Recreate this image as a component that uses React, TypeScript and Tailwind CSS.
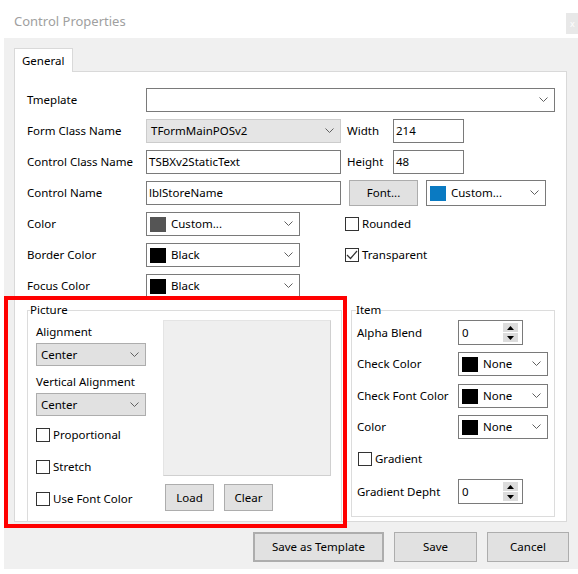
import type { ReactNode } from "react";

const Chevron = () => (
  <svg width="9" height="6" viewBox="0 0 9 6" className="shrink-0">
    <polyline points="0.5,0.5 4.5,4.5 8.5,0.5" fill="none" stroke="#606060" strokeWidth="1" />
  </svg>
);

const Combo = (props: {
  className?: string;
  swatch?: string;
  text?: string;
  variant?: "white" | "disabled" | "button";
}) => {
  const variant = props.variant ?? "white";
  const skin =
    variant === "white"
      ? "bg-white border-[#7a7a7a]"
      : variant === "disabled"
        ? "bg-[#e5e5e5] border-[#cccccc]"
        : "bg-[#e1e1e1] border-[#adadad]";
  return (
    <div className={`flex items-center border ${skin} pr-[6px] ${props.className ?? ""}`}>
      {props.swatch && (
        <span className="ml-[3px] h-[15px] w-[16px] shrink-0" style={{ background: props.swatch }} />
      )}
      <span className={`flex-1 truncate ${props.swatch ? "pl-[5px]" : "pl-[4px]"}`}>{props.text}</span>
      <Chevron />
    </div>
  );
};

const TextBox = (props: { className?: string; text?: string }) => (
  <div className={`flex items-center border border-[#7a7a7a] bg-white pl-[2px] ${props.className ?? ""}`}>
    {props.text}
  </div>
);

const Spin = (props: { className?: string; text: string }) => (
  <div className={`flex items-center border border-[#7a7a7a] bg-white pl-[3px] pr-[4px] ${props.className ?? ""}`}>
    <span className="flex-1">{props.text}</span>
    <div className="flex flex-col gap-[1px]">
      <div className="flex h-[9px] w-[15px] items-center justify-center bg-[#dcdcdc]">
        <svg width="7" height="4" viewBox="0 0 7 4">
          <polygon points="3.5,0 7,4 0,4" fill="#000" />
        </svg>
      </div>
      <div className="flex h-[9px] w-[15px] items-center justify-center bg-[#dcdcdc]">
        <svg width="7" height="4" viewBox="0 0 7 4">
          <polygon points="0,0 7,0 3.5,4" fill="#000" />
        </svg>
      </div>
    </div>
  </div>
);

const Check = (props: { label: string; checked?: boolean; className?: string }) => (
  <div className={`flex h-[16px] items-center ${props.className ?? ""}`}>
    <span className="flex h-[14px] w-[14px] shrink-0 items-center justify-center border border-[#333333] bg-white">
      {props.checked && (
        <svg width="12" height="10" viewBox="0 0 12 10">
          <polyline points="1,5 4.5,8.5 11,1" fill="none" stroke="#333" strokeWidth="1.2" />
        </svg>
      )}
    </span>
    <span className="ml-[3px]">{props.label}</span>
  </div>
);

const Btn = (props: { children: ReactNode; className?: string }) => (
  <div className={`flex items-center justify-center border border-[#adadad] bg-[#e1e1e1] ${props.className ?? ""}`}>
    {props.children}
  </div>
);

const Row = (props: { label: string; children: ReactNode; className?: string }) => (
  <div className={`flex h-[24px] items-center ${props.className ?? ""}`}>
    <span className="w-[119px] shrink-0">{props.label}</span>
    {props.children}
  </div>
);

export default function App() {
  return (
    <div
      className="relative h-[574px] w-[578px] overflow-hidden bg-white text-[11.5px] leading-[16px] text-black"
      style={{ fontFamily: '"Noto Sans", sans-serif' }}
    >
      {/* title bar */}
      <div className="flex h-[38px] items-start justify-between">
        <span className="ml-[14px] mt-[13px] text-[13px] text-[#a0a0a0]">Control Properties</span>
        <div className="mt-[13px] flex h-[21px] w-[12px] items-center bg-[#e8e8e8] pl-[4px] text-[9px] text-white">
          x
        </div>
      </div>

      {/* window body */}
      <div className="ml-[4px] h-[531px] w-[574px] bg-[#f0f0f0] pl-[10px] pr-[11px] pt-[10px]">
        {/* tab */}
        <div className="relative z-10 -mb-px flex h-[24px] w-[59px] items-center border border-b-0 border-[#d9d9d9] bg-white pl-[7px]">
          General
        </div>

        {/* tab panel */}
        <div className="h-[451px] border border-[#d9d9d9] bg-white pl-[12px] pt-[16px]">
          <div className="flex flex-col gap-[7px]">
            <Row label="Tmeplate">
              <Combo className="h-[24px] w-[409px]" />
            </Row>
            <Row label="Form Class Name">
              <Combo className="h-[24px] w-[195px]" variant="disabled" text="TFormMainPOSv2" />
              <span className="ml-[6px] w-[46px]">Width</span>
              <TextBox className="h-[24px] w-[71px]" text="214" />
            </Row>
            <Row label="Control Class Name">
              <TextBox className="h-[24px] w-[195px]" text="TSBXv2StaticText" />
              <span className="ml-[6px] w-[46px]">Height</span>
              <TextBox className="h-[24px] w-[71px]" text="48" />
            </Row>
            <Row label="Control Name">
              <TextBox className="h-[24px] w-[195px]" text="lblStoreName" />
              <Btn className="ml-[8px] h-[26px] w-[69px]">Font...</Btn>
              <Combo className="ml-[8px] h-[26px] w-[120px]" swatch="#0a7ac2" text="Custom..." />
            </Row>
            <Row label="Color">
              <Combo className="h-[24px] w-[154px]" swatch="#555555" text="Custom..." />
              <Check className="ml-[45px]" label="Rounded" />
            </Row>
            <Row label="Border Color">
              <Combo className="h-[24px] w-[154px]" swatch="#000000" text="Black" />
              <Check className="ml-[45px]" label="Transparent" checked />
            </Row>
            <Row label="Focus Color">
              <Combo className="h-[24px] w-[154px]" swatch="#000000" text="Black" />
            </Row>
          </div>

          <div className="mt-[4px] flex items-start">
            {/* Picture group */}
            <fieldset className="w-[315px] border border-[#dcdcdc] pb-[10px] pl-[8px]">
              <legend className="-ml-[6px] leading-[16px]">Picture</legend>
              <div className="flex">
                <div className="flex w-[110px] flex-col">
                  <span className="mt-[6px]">Alignment</span>
                  <Combo className="mt-[3px] h-[23px] w-[110px]" variant="button" text="Center" />
                  <span className="mt-[8px]">Vertical Alignment</span>
                  <Combo className="mt-[3px] h-[23px] w-[110px]" variant="button" text="Center" />
                  <Check className="mt-[11px]" label="Proportional" />
                  <Check className="mt-[16px]" label="Stretch" />
                  <Check className="mt-[16px]" label="Use Font Color" />
                </div>
                <div className="ml-[17px] flex flex-col">
                  <div className="mt-[2px] h-[156px] w-[168px] border border-[#e4e4e4] border-b-[#d0d0d0] border-r-[#d0d0d0] bg-[#efefef]" />
                  <div className="mt-[8px] flex gap-[10px] pl-[2px]">
                    <Btn className="h-[27px] w-[49px]">Load</Btn>
                    <Btn className="h-[27px] w-[49px]">Clear</Btn>
                  </div>
                </div>
              </div>
            </fieldset>

            {/* Item group */}
            <fieldset className="ml-[9px] w-[204px] border border-[#dcdcdc] pb-[12px] pl-[5px]">
              <legend className="-ml-[1px] leading-[16px]">Item</legend>
              <div className="flex flex-col">
                <div className="mt-[2px] flex h-[25px] items-center">
                  <span className="w-[101px] shrink-0">Alpha Blend</span>
                  <Spin className="h-[25px] w-[65px]" text="0" />
                </div>
                <div className="mt-[7px] flex h-[24px] items-center">
                  <span className="w-[101px] shrink-0">Check Color</span>
                  <Combo className="h-[24px] w-[90px]" swatch="#000000" text="None" />
                </div>
                <div className="mt-[8px] flex h-[24px] items-center">
                  <span className="w-[101px] shrink-0">Check Font Color</span>
                  <Combo className="h-[24px] w-[90px]" swatch="#000000" text="None" />
                </div>
                <div className="mt-[7px] flex h-[24px] items-center">
                  <span className="w-[101px] shrink-0">Color</span>
                  <Combo className="h-[24px] w-[90px]" swatch="#000000" text="None" />
                </div>
                <Check className="mt-[12px] pl-[1px]" label="Gradient" />
                <div className="mt-[12px] flex h-[25px] items-center">
                  <span className="w-[101px] shrink-0">Gradient Depht</span>
                  <Spin className="h-[25px] w-[65px]" text="0" />
                </div>
              </div>
            </fieldset>
          </div>
        </div>

        {/* dialog buttons */}
        <div className="mt-[10px] flex justify-end gap-[10px]">
          <Btn className="h-[30px] w-[131px] border-2 border-[#0078d7]">Save as Template</Btn>
          <Btn className="h-[30px] w-[83px]">Save</Btn>
          <Btn className="mr-[-2px] h-[30px] w-[82px]">Cancel</Btn>
        </div>
      </div>

      {/* annotation box */}
      <div className="pointer-events-none absolute left-[4px] top-[296px] h-[232px] w-[343px] border-4 border-[#ff0000]" />
    </div>
  );
}
